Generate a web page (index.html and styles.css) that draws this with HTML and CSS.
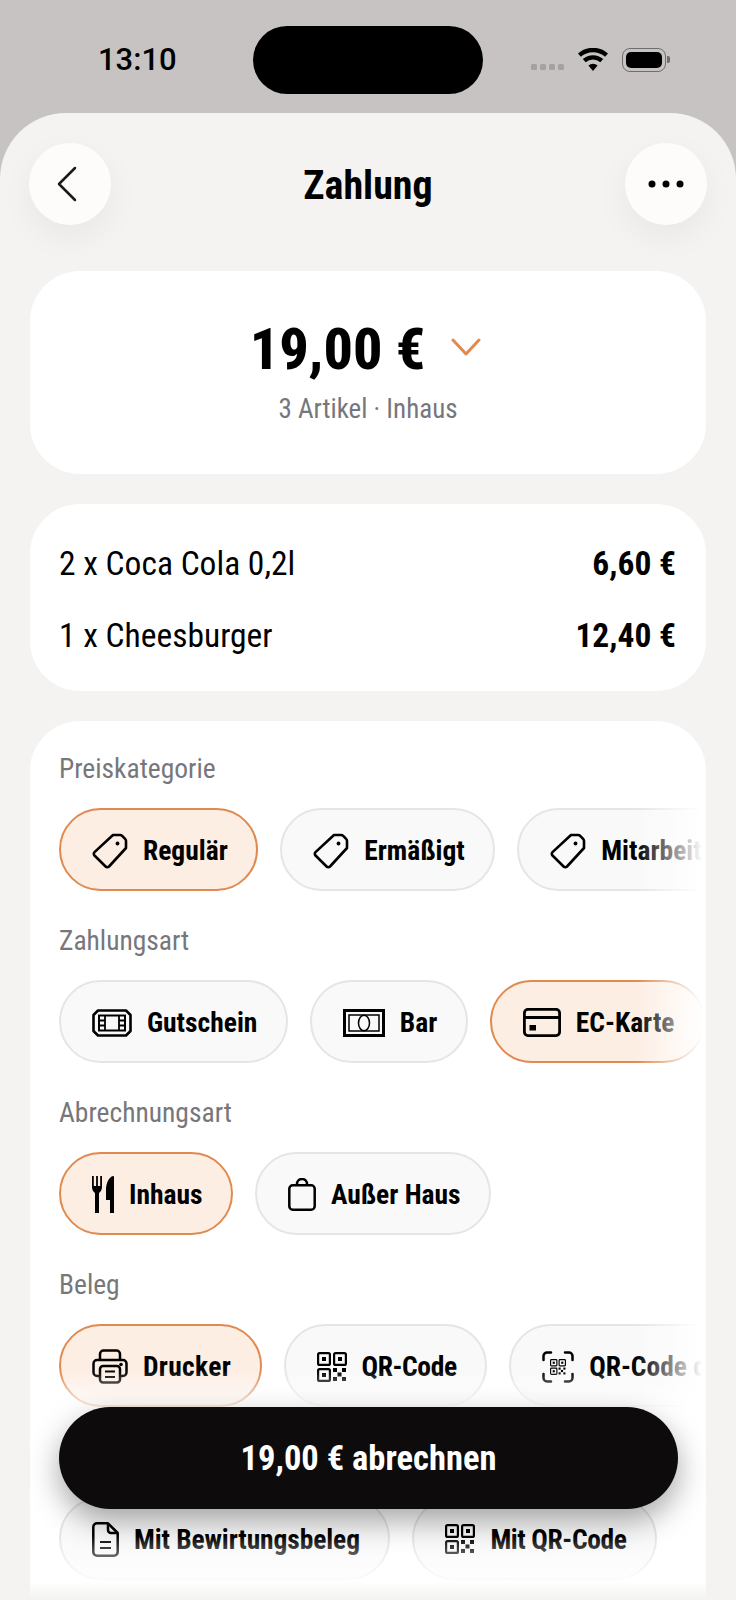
FILE: index.html
```html
<!DOCTYPE html>
<html lang="de">
<head>
  <meta charset="UTF-8">
  <title>Zahlung</title>
  <link rel="stylesheet" href="styles.css">
</head>
<body>

  <svg class="defs" width="0" height="0">
    <symbol id="i-tag" viewBox="0 0 36 36">
      <path d="M21 2h7a3 3 0 0 1 2.200.9l2.900 2.900a3 3 0 0 1 .9 2.200v7L17 33.500a2.400 2.400 0 0 1-3.400 0L2.500 22.500a2.400 2.400 0 0 1 0-3.400z" fill="none" stroke="currentColor" stroke-width="2.600" stroke-linejoin="round"/>
      <circle cx="25.500" cy="10.500" r="1.900" fill="currentColor"/>
    </symbol>
    <symbol id="i-qr" viewBox="0 0 30 30">
      <g fill="none" stroke="currentColor" stroke-width="2.200">
        <rect x="1.100" y="1.100" width="11.800" height="11.800" rx="1.500"/>
        <rect x="17.100" y="1.100" width="11.800" height="11.800" rx="1.500"/>
        <rect x="1.100" y="17.100" width="11.800" height="11.800" rx="1.500"/>
      </g>
      <g fill="currentColor">
        <rect x="5" y="5" width="4" height="4"/>
        <rect x="21" y="5" width="4" height="4"/>
        <rect x="5" y="21" width="4" height="4"/>
        <rect x="16" y="16" width="4" height="4"/>
        <rect x="25" y="16" width="4" height="4"/>
        <rect x="20.500" y="20.500" width="4" height="4"/>
        <rect x="16" y="25" width="4" height="4"/>
        <rect x="25" y="25" width="4" height="4"/>
      </g>
    </symbol>
  </svg>

  <header class="status">
    <span class="time">13:10</span>
    <div class="island"></div>
    <div class="status-icons">
      <div class="signal"><i></i><i></i><i></i><i></i></div>
      <svg class="wifi" width="30" height="23" viewBox="0 0 30 23">
        <path d="M15 23l-4.600-5.500a7 7 0 0 1 9.200 0zM7.700 14.300L4.800 11a15.500 15.500 0 0 1 20.400 0l-2.900 3.300a11 11 0 0 0-14.600 0zM2.900 8.700L0 5.400a22.800 22.800 0 0 1 30 0l-2.900 3.300a18.500 18.500 0 0 0-24.200 0z" fill="#000"/>
      </svg>
      <div class="battery"><div class="battery-fill"></div></div>
    </div>
  </header>

  <main class="sheet">
    <nav class="topbar">
      <button class="round-btn">
        <svg class="back-icon" width="24" height="36" viewBox="0 0 24 36"><path d="M20 2L4 18l16 16" fill="none" stroke="#1a1a1a" stroke-width="2.500" stroke-linecap="round" stroke-linejoin="round"/></svg>
      </button>
      <h1>Zahlung</h1>
      <button class="round-btn">
        <svg width="36" height="8" viewBox="0 0 36 8"><circle cx="4" cy="4" r="3.500"/><circle cx="18" cy="4" r="3.500"/><circle cx="32" cy="4" r="3.500"/></svg>
      </button>
    </nav>

    <section class="card total-card">
      <div class="total-line">
        <span class="total">19,00 €</span>
        <svg class="total-arrow" width="30" height="18" viewBox="0 0 30 18"><path d="M2 2l13 14L28 2" fill="none" stroke="#e08a4f" stroke-width="3" stroke-linecap="round" stroke-linejoin="round"/></svg>
      </div>
      <p class="total-sub">3 Artikel · Inhaus</p>
    </section>

    <section class="card items-card">
      <div class="item"><span>2 x Coca Cola 0,2l</span><strong>6,60 €</strong></div>
      <div class="item"><span>1 x Cheesburger</span><strong>12,40 €</strong></div>
    </section>

    <section class="card options-card">
      <h2>Preiskategorie</h2>
      <div class="chips fade">
        <div class="chip active"><svg width="36" height="36"><use href="#i-tag"/></svg>Regulär</div>
        <div class="chip"><svg width="36" height="36"><use href="#i-tag"/></svg>Ermäßigt</div>
        <div class="chip"><svg width="36" height="36"><use href="#i-tag"/></svg>Mitarbeiter</div>
      </div>

      <h2>Zahlungsart</h2>
      <div class="chips fade">
        <div class="chip">
          <svg width="40" height="28" viewBox="0 0 40 28" fill="none" stroke="currentColor">
            <path d="M6 1.500h28l4.500 4.500v16L34 26.500H6L1.500 22V6z" stroke-width="2.600" stroke-linejoin="round"/>
            <rect x="7" y="6.500" width="26" height="15" stroke-width="2"/>
            <path d="M13 6.500v15M27 6.500v15M7 11.500h6M7 16.500h6M27 11.500h6M27 16.500h6" stroke-width="1.800"/>
          </svg>Gutschein</div>
        <div class="chip">
          <svg width="42" height="28" viewBox="0 0 42 28" fill="none" stroke="currentColor">
            <rect x="1.500" y="1.500" width="39" height="25" stroke-width="3"/>
            <rect x="6" y="6" width="30" height="16" stroke-width="1.500"/>
            <ellipse cx="21" cy="14" rx="5.500" ry="7.800" stroke-width="1.500"/>
          </svg>Bar</div>
        <div class="chip active">
          <svg width="38" height="29" viewBox="0 0 38 29" fill="none" stroke="currentColor">
            <rect x="1.400" y="1.400" width="35.200" height="26.200" rx="3.500" stroke-width="2.800"/>
            <path d="M1.400 9.500h35.200" stroke-width="2.800"/>
            <rect x="6.500" y="17" width="6.500" height="5.500" fill="currentColor" stroke="none"/>
          </svg>EC-Karte</div>
      </div>

      <h2>Abrechnungsart</h2>
      <div class="chips">
        <div class="chip active">
          <svg width="22" height="37" viewBox="0 0 22 37" fill="currentColor">
            <path d="M0 0h1.800v10h2.300V0h1.800v10h2.300V0H10v11c0 3-1.500 5-3 6v20H3V17c-1.500-1-3-3-3-6z"/>
            <path d="M21 0a1 1 0 0 1 1 1v36h-4V24h-4V14C14 7 17 1 21 0z"/>
          </svg>Inhaus</div>
        <div class="chip">
          <svg width="28" height="33" viewBox="0 0 28 33" fill="none" stroke="currentColor" stroke-width="2.500">
            <rect x="1.300" y="7.300" width="25.400" height="24.400" rx="3.500"/>
            <path d="M9 7.300V6a5 5 0 0 1 10 0v1.300"/>
          </svg>Außer Haus</div>
      </div>

      <h2>Beleg</h2>
      <div class="chips fade">
        <div class="chip chip-wide active">
          <svg width="36" height="35" viewBox="0 0 36 35" fill="none" stroke="currentColor" stroke-width="2.500">
            <path d="M8 11V5a3.500 3.500 0 0 1 3.500-3.500h13A3.500 3.500 0 0 1 28 5v6"/>
            <path d="M8 27H5a3.500 3.500 0 0 1-3.500-3.500v-9A3.500 3.500 0 0 1 5 11h26a3.500 3.500 0 0 1 3.500 3.500v9A3.500 3.500 0 0 1 31 27h-3"/>
            <rect x="8" y="17" width="20" height="16.500" rx="3"/>
            <path d="M13 22.500h10M13 28h10" stroke-width="2"/>
            <circle cx="29" cy="15.500" r="1.800" fill="currentColor" stroke="none"/>
          </svg>Drucker</div>
        <div class="chip chip-tight"><svg width="30" height="30"><use href="#i-qr"/></svg>QR-Code</div>
        <div class="chip">
          <svg width="32" height="32" viewBox="0 0 32 32">
            <path d="M1.500 9V5a3.500 3.500 0 0 1 3.500-3.500h4M23 1.500h4A3.500 3.500 0 0 1 30.500 5v4M30.500 23v4a3.500 3.500 0 0 1-3.500 3.500h-4M9 30.500H5A3.500 3.500 0 0 1 1.500 27v-4" fill="none" stroke="currentColor" stroke-width="2.500" stroke-linecap="round"/>
            <use href="#i-qr" x="8" y="7" width="16" height="18"/>
          </svg>QR-Code digital</div>
      </div>

      <div class="chips chips-last">
        <div class="chip chip-slim">
          <svg width="27" height="35" viewBox="0 0 27 35" fill="none" stroke="currentColor" stroke-width="2.500">
            <path d="M16 1.300H5A3.700 3.700 0 0 0 1.300 5v25A3.700 3.700 0 0 0 5 33.700h17a3.700 3.700 0 0 0 3.700-3.700V11z" stroke-linejoin="round"/>
            <path d="M16 1.300V8a3 3 0 0 0 3 3h6.700"/>
            <path d="M8 20h11M8 26h11" stroke-width="2"/>
          </svg>Mit Bewirtungsbeleg</div>
        <div class="chip chip-tight"><svg width="30" height="30"><use href="#i-qr"/></svg>Mit QR-Code</div>
      </div>
    </section>
  </main>

  <div class="bottom-fade"></div>
  <button class="pay-btn">19,00 € abrechnen</button>

</body>
</html>
```

FILE: styles.css
```css
* {
  box-sizing: border-box;
}
html, body {
  margin: 0;
  padding: 0;
}
body {
  position: relative;
  width: 736px;
  height: 1600px;
  overflow: hidden;
  background: #c6c3c2;
  color: #000;
  font-family: Roboto, sans-serif;
  font-stretch: 75%;
}
.defs {
  position: absolute;
}
h1, h2, p {
  margin: 0;
}

/* status bar */
.status {
  height: 113px;
  position: relative;
  display: flex;
  align-items: center;
  justify-content: space-between;
  padding: 0 70px 0 98px;
}
.time {
  font-size: 31px;
  font-weight: 500;
  font-stretch: 88%;
  margin-top: 6px;
}
.island {
  position: absolute;
  left: 253px;
  top: 26px;
  width: 230px;
  height: 68px;
  border-radius: 34px;
  background: #000;
}
.status-icons {
  display: flex;
  align-items: center;
  gap: 14px;
  margin-top: 6px;
}
.signal {
  display: flex;
  gap: 3px;
  margin-top: 14px;
}
.signal i {
  width: 6px;
  height: 6px;
  border-radius: 1.500px;
  background: #a3a1a1;
}
.battery {
  position: relative;
  width: 44px;
  height: 24px;
  padding: 3px;
  border: 1.500px solid #6f6d6d;
  border-radius: 8px;
}
.battery::after {
  content: "";
  position: absolute;
  right: -5px;
  top: 7px;
  width: 3px;
  height: 7px;
  border-radius: 0 2px 2px 0;
  background: #6f6d6d;
}
.battery-fill {
  height: 100%;
  background: #000;
  border-radius: 5px;
}

/* sheet */
.sheet {
  height: 1487px;
  padding: 30px 30px 0;
  border-radius: 66px 66px 0 0;
  background: #f4f3f2;
}
.topbar {
  display: flex;
  justify-content: space-between;
  align-items: center;
  margin: 0 -1px 46px;
}
.topbar h1 {
  font-size: 40px;
  font-weight: 700;
  padding-top: 2px;
}
.back-icon {
  margin-right: 6px;
}
.round-btn {
  display: flex;
  align-items: center;
  justify-content: center;
  width: 82px;
  height: 82px;
  padding: 0;
  border: none;
  border-radius: 50%;
  background: #fdfcfb;
  box-shadow: 0 12px 34px rgba(0, 0, 0, 0.05);
}
.card {
  background: #fff;
  border-radius: 50px;
  margin-bottom: 30px;
}
.total-card {
  height: 203px;
  padding-top: 48px;
  text-align: center;
}
.total-line {
  display: flex;
  justify-content: center;
  align-items: center;
  gap: 26px;
  margin-right: 5px;
}
.total {
  font-size: 58px;
  line-height: 60px;
  font-weight: 800;
}
.total-arrow {
  margin-top: -4px;
}
.total-sub {
  margin-top: 14px;
  font-size: 27px;
  line-height: 32px;
  color: #77777b;
}
.items-card {
  height: 187px;
  padding: 40px 30px 0 29px;
}
.item {
  display: flex;
  justify-content: space-between;
  align-items: center;
  height: 38px;
  margin-bottom: 34px;
  font-size: 33.500px;
}
.item strong {
  font-weight: 700;
}
.options-card {
  height: 900px;
  padding: 28px 0 0 29px;
}
.options-card h2 {
  padding-top: 1px;
  font-size: 27.500px;
  line-height: 38px;
  font-weight: 400;
  color: #77777b;
  margin-bottom: 20px;
}
.chips {
  position: relative;
  display: flex;
  gap: 22px;
  height: 83px;
  overflow: hidden;
  margin-bottom: 30px;
  width: 647px;
}
.chips.fade::after {
  content: "";
  position: absolute;
  top: 0;
  right: 0;
  bottom: 0;
  width: 70px;
  background: linear-gradient(to right, rgba(255, 255, 255, 0), #fff 95%);
}
.chips-last {
  margin-top: 89.500px;
}
.chip {
  flex: none;
  display: flex;
  align-items: center;
  gap: 15px;
  height: 83px;
  padding: 2px 28.500px 0 31px;
  border: 2px solid #e6e5e5;
  border-radius: 42px;
  background: #faf9f9;
  font-size: 27.500px;
  font-weight: 700;
  white-space: nowrap;
}
.chip svg {
  flex: none;
}
.chip.active {
  border-color: #e08a4f;
  background: #fdeee4;
}
.chip-wide {
  letter-spacing: 0.3px;
}
.chip-slim {
  letter-spacing: -0.1px;
}
.chip-tight {
  letter-spacing: -0.4px;
}

/* bottom */
.bottom-fade {
  position: absolute;
  left: 30px;
  right: 30px;
  bottom: 0;
  height: 230px;
  background: linear-gradient(to bottom, rgba(255, 255, 255, 0), rgba(255, 255, 255, 0.9) 18%, rgba(255, 255, 255, 0) 40%, rgba(255, 255, 255, 0) 72%, rgba(255, 255, 255, 0.9) 92%, #f4f3f2);
}
.pay-btn {
  position: absolute;
  left: 59px;
  top: 1407px;
  width: 619px;
  height: 102px;
  border: none;
  border-radius: 51px;
  background: #0d0b0b;
  color: #fff;
  font-family: inherit;
  font-stretch: inherit;
  font-size: 34.500px;
  font-weight: 700;
  box-shadow: 0 12px 30px rgba(0, 0, 0, 0.35);
}
```
